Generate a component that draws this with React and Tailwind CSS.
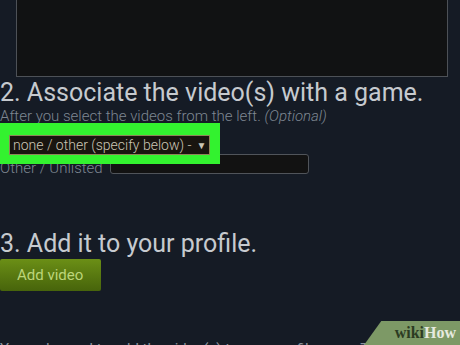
import React from 'react';

// Steam-style "add video" form, dark theme, with a highlight box round the game select
export default function App() {
  return (
    <div className="relative w-[460px] h-[345px] overflow-hidden bg-[#151b25] font-['Roboto','Liberation_Sans',sans-serif]">
      {/* video list box, cut off at the top */}
      <div className="ml-[16px] w-[432px] h-[77px] bg-[#111213] border border-t-0 border-[#4d5157]" />

      <h2 className="mt-[1px] text-[25px] leading-[29px] text-[#c6cacf] whitespace-nowrap">
        2. Associate the video(s) with a game.
      </h2>
      <p className="text-[15px] leading-[18px] font-light text-[#7e8792] whitespace-nowrap">
        After you select the videos from the left. <i>(Optional)</i>
      </p>

      <div className="relative mt-[10px]">
        {/* green highlight drawn over the form */}
        <div className="absolute left-0 top-[-12px] w-[220px] h-[41px] bg-[#33f22f] z-10" />

        <div className="relative z-20 ml-[9px] w-[201px] h-[20px] flex items-center px-[3px] bg-[#19150f] border border-[#8f8459] text-[14px] font-light text-[#cbc6b6] whitespace-nowrap">
          none / other (specify below) - <span className="ml-[5px] text-[10px]">▼</span>
        </div>

        <div className="flex items-start mt-[-1px]">
          <span className="pt-[5px] text-[15px] leading-[18px] font-light text-[#7e8792] whitespace-nowrap">
            Other / Unlisted
          </span>
          <div className="ml-[7px] w-[199px] h-[20px] bg-[#121212] border border-[#50545a] rounded-[3px]" />
        </div>
      </div>

      <h2 className="mt-[52px] text-[25px] leading-[29px] text-[#c6cacf] whitespace-nowrap">
        3. Add it to your profile.
      </h2>
      <button className="mt-[1px] w-[101px] h-[32px] rounded-[2px] bg-gradient-to-b from-[#6b8f16] to-[#47640b] text-[15px] text-[#bcd57a] text-left pl-[17px]">
        Add video
      </button>

      <p className="mt-[49px] text-[15px] leading-[18px] text-[#8a929c] whitespace-nowrap">
        You only need to add the video(s) to your profile once. This
      </p>

      {/* wikiHow watermark */}
      <div className="absolute right-0 bottom-0 w-[96px] h-[24px] bg-[#7d9966] [clip-path:polygon(18%_0,100%_0,100%_100%,0_100%)] flex items-center justify-end pr-[4px]">
        <span className="font-['Liberation_Serif',serif] font-bold text-[16px] leading-none">
          <span className="text-[#2c3b22]">wiki</span>
          <span className="text-[#e6eadf]">How</span>
        </span>
      </div>
    </div>
  );
}
